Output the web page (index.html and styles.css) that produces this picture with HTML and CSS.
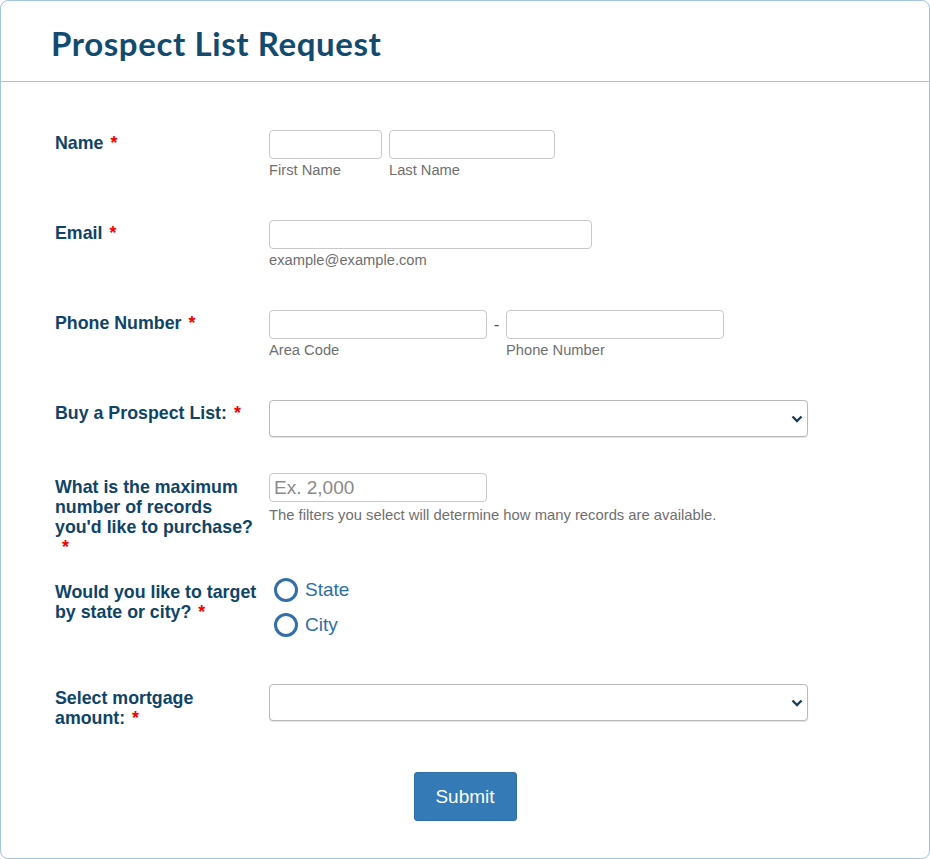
FILE: index.html
```html
<!DOCTYPE html>
<html lang="en">
<head>
  <meta charset="UTF-8">
  <meta name="viewport" content="width=device-width, initial-scale=1.0">
  <title>Prospect List Request</title>
  <link rel="stylesheet" href="styles.css">
</head>
<body>
  <div class="card">
    <div class="card-header">
      <h1>Prospect List Request</h1>
    </div>

    <form class="form-body">
      <div class="row">
        <label class="label">Name <span class="req">*</span></label>
        <div class="field">
          <div class="inline">
            <div class="sub-field">
              <input type="text" class="input first">
              <span class="sublabel">First Name</span>
            </div>
            <div class="sub-field">
              <input type="text" class="input last">
              <span class="sublabel">Last Name</span>
            </div>
          </div>
        </div>
      </div>

      <div class="row">
        <label class="label">Email <span class="req">*</span></label>
        <div class="field">
          <input type="email" class="input email">
          <span class="sublabel">example@example.com</span>
        </div>
      </div>

      <div class="row">
        <label class="label">Phone Number <span class="req">*</span></label>
        <div class="field">
          <div class="inline">
            <div class="sub-field">
              <input type="text" class="input phone">
              <span class="sublabel">Area Code</span>
            </div>
            <span class="dash">-</span>
            <div class="sub-field">
              <input type="text" class="input phone">
              <span class="sublabel">Phone Number</span>
            </div>
          </div>
        </div>
      </div>

      <div class="row row-select">
        <label class="label">Buy a Prospect List: <span class="req">*</span></label>
        <div class="field">
          <div class="select-wrap">
            <select class="select"><option></option></select>
            <svg class="chevron" width="12" height="8" viewBox="0 0 12 8"><path d="M1.5 1.5 L6 6 L10.5 1.5" fill="none" stroke="#1d3d57" stroke-width="2.4"/></svg>
          </div>
        </div>
      </div>

      <div class="row row-max">
        <label class="label">What is the maximum number of records you'd like to purchase?<br><span class="req">&nbsp;*</span></label>
        <div class="field">
          <input type="text" class="input records" placeholder="Ex. 2,000">
          <span class="sublabel help">The filters you select will determine how many records are available.</span>
        </div>
      </div>

      <div class="row row-radio">
        <label class="label">Would you like to target by state or city? <span class="req">*</span></label>
        <div class="field">
          <label class="radio"><input type="radio" name="target"><span class="circle"></span>State</label>
          <label class="radio"><input type="radio" name="target"><span class="circle"></span>City</label>
        </div>
      </div>

      <div class="row row-mortgage">
        <label class="label">Select mortgage amount: <span class="req">*</span></label>
        <div class="field">
          <div class="select-wrap">
            <select class="select"><option></option></select>
            <svg class="chevron" width="12" height="8" viewBox="0 0 12 8"><path d="M1.5 1.5 L6 6 L10.5 1.5" fill="none" stroke="#1d3d57" stroke-width="2.4"/></svg>
          </div>
        </div>
      </div>

      <div class="actions">
        <button type="button" class="submit">Submit</button>
      </div>
    </form>
  </div>
</body>
</html>
```

FILE: styles.css
```css
body {
  margin: 0;
  background: #ffffff;
  font-family: "Liberation Sans", Arial, sans-serif;
}

.card {
  width: 930px;
  box-sizing: border-box;
  border: 1px solid #a6c3dc;
  border-radius: 8px;
  background: #fff;
}

.card-header {
  height: 80px;
  border-bottom: 1px solid #a6c3dc;
  padding-left: 50px;
  display: flex;
  align-items: center;
}

.card-header h1 {
  margin: 0;
  font-family: Lato, "Open Sans", sans-serif;
  font-weight: 700;
  font-size: 33px;
  color: #124b6e;
  letter-spacing: 0.6px;
  padding-top: 4px;
}

.form-body {
  padding: 48px 0 37px 54px;
}

.row {
  display: flex;
  padding-bottom: 42px;
}

.row-select { padding-bottom: 36px; }
.row-max { padding-bottom: 21px; }
.row-radio { padding-bottom: 47px; }
.row-mortgage { padding-bottom: 44px; }

/* Labels column */
.label {
  width: 214px;
  flex-shrink: 0;
  box-sizing: border-box;
  padding-right: 8px;
  margin-top: 3px;
  font-size: 17.8px;
  line-height: 20px;
  font-weight: 700;
  color: #0f4468;
}

.row-max .label,
.row-radio .label,
.row-mortgage .label {
  margin-top: 4px;
}

.req {
  color: #f20000;
  margin-left: 2px;
}

.field {
  display: flex;
  flex-direction: column;
  align-items: flex-start;
}

.inline {
  display: flex;
  align-items: flex-start;
}

.sub-field {
  display: flex;
  flex-direction: column;
}

.sub-field + .sub-field {
  margin-left: 7px;
}

.input {
  box-sizing: border-box;
  height: 29px;
  border: 1px solid #c8c8c8;
  border-radius: 4px;
  padding: 0 4px;
  font-family: "Liberation Sans", Arial, sans-serif;
  font-size: 19px;
  color: #333;
  background: #fff;
}

.input::placeholder {
  color: #8a8a8a;
}

.input.first { width: 113px; }
.input.last { width: 166px; }
.input.email { width: 323px; }
.input.phone { width: 218px; }
.input.records { width: 218px; }

.dash {
  width: 19px;
  text-align: center;
  font-size: 17px;
  color: #555;
  line-height: 29px;
}

.sublabel {
  margin-top: 3px;
  font-size: 14.7px;
  line-height: 16px;
  color: #6f6f6f;
}

.sublabel.help {
  margin-top: 5px;
  font-size: 14.8px;
}

/* Dropdowns */
.select-wrap {
  position: relative;
}

.select {
  appearance: none;
  -webkit-appearance: none;
  width: 539px;
  height: 37px;
  box-sizing: border-box;
  border: 1px solid #b9b9b9;
  border-radius: 4px;
  background: #fff;
  box-shadow: 0 1px 1px rgba(0, 0, 0, 0.12);
}

.chevron {
  position: absolute;
  right: 5px;
  top: 15px;
  pointer-events: none;
}

/* Radios */
.radio {
  display: flex;
  align-items: center;
  height: 24px;
  margin-left: 5px;
  font-size: 19px;
  color: #2f6ea6;
}

.radio + .radio {
  margin-top: 11px;
}

.radio input {
  display: none;
}

.circle {
  width: 24px;
  height: 24px;
  box-sizing: border-box;
  border: 3px solid #336fa8;
  border-radius: 50%;
  margin-right: 7px;
}

/* Submit */
.actions {
  display: flex;
  justify-content: center;
  margin-left: -54px;
}

.submit {
  width: 103px;
  height: 49px;
  background: #337ab7;
  border: 1px solid #2e6fa7;
  border-radius: 3px;
  color: #fff;
  font-family: "Liberation Sans", Arial, sans-serif;
  font-size: 19px;
  cursor: pointer;
}
```
